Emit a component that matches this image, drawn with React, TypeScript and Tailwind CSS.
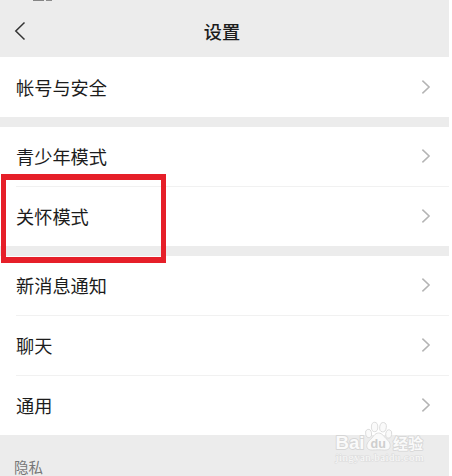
type RowProps = {
  label: string;
  height: string;
  divider?: boolean;
};

function SettingRow({ label, height, divider }: RowProps) {
  return (
    <div className={`flex pl-4 ${height}`}>
      <div
        className={`flex flex-1 items-center justify-between pr-[18px] pt-px ${
          divider ? 'border-b border-[#f1f1f1]' : ''
        }`}
      >
        <span className="pb-[1.5px] text-[18.2px] leading-6">{label}</span>
        <svg className="mb-px h-4 w-[10px]" viewBox="0 0 10 16" fill="none">
          <path d="M1.4 1.6L8.1 8L1.4 14.4" stroke="#b4b4b4" strokeWidth="1.5" />
        </svg>
      </div>
    </div>
  );
}

function Watermark() {
  return (
    <svg
      className="absolute left-[330px] top-[418px] h-[50px] w-[100px]"
      viewBox="0 0 100 50"
      fontFamily='"Liberation Sans", "Noto Sans CJK SC", sans-serif'
    >
      <g fill="#fafafa" stroke="#d6d6d6" strokeLinejoin="round">
        <text x="5.5" y="31" fontSize="19" fontWeight="700" strokeWidth="1.8" textLength="29" lengthAdjust="spacingAndGlyphs" paintOrder="stroke">
          Bai
        </text>
        <g strokeWidth="0.8">
          <ellipse cx="38.6" cy="15.5" rx="3" ry="4.2" transform="rotate(-12 38.6 15.5)" />
          <ellipse cx="44.6" cy="9" rx="3.2" ry="4.7" />
          <ellipse cx="53" cy="9.2" rx="3.3" ry="4.7" transform="rotate(8 53 9.2)" />
          <ellipse cx="58.7" cy="16" rx="3" ry="4.2" transform="rotate(12 58.7 16)" />
          <path d="M48.5 15C44.5 15 43.5 19 40.5 21.5C37 24 35.6 28.8 38 31C40.2 32.8 44 31.8 48.5 31.8C53 31.8 56.8 32.8 59 31C61.3 28.8 60.3 24 57 21.5C54 19 52.5 15 48.5 15Z" />
        </g>
        <text x="63" y="30.5" fontSize="15" fontWeight="700" strokeWidth="1.6" textLength="30" paintOrder="stroke">
          经验
        </text>
      </g>
      <text x="40.5" y="30" fontSize="12.5" fontWeight="700" fill="#cecece" textLength="15.5">
        du
      </text>
      <text x="5.5" y="42.5" fontSize="11" fontFamily='"Liberation Serif", serif' fill="#fafafa" stroke="#dcdcdc" strokeWidth="1.2" textLength="88" paintOrder="stroke">
        jingyan.baidu.com
      </text>
    </svg>
  );
}

export default function App() {
  return (
    <div className="h-[476px] w-[452px] overflow-hidden bg-white">
      <main className='relative flex h-full w-[449px] flex-col overflow-hidden bg-[#ececec] font-["Noto_Sans_CJK_SC",sans-serif] text-[#1c1c1c]'>
        {/* Bottom edge of the status bar */}
        <div className="flex h-[2px] shrink-0 gap-[2px] pl-[33px]">
          <span className="h-px w-[11px] bg-[#858585]" />
          <span className="h-px w-[6px] bg-[#8c8c8c]" />
        </div>

        <header className="grid h-[55px] shrink-0 grid-cols-3 items-center pb-[3px] pt-[5px]">
          <svg className="ml-[14px] h-5 w-3" viewBox="0 0 12 20" fill="none">
            <path d="M10.5 1.5L1.8 10L10.5 18.5" stroke="#333" strokeWidth="1.5" />
          </svg>
          <h1 className="pr-[5px] text-center text-[18.2px] font-medium leading-6">设置</h1>
        </header>

        <section className="bg-white">
          <SettingRow label="帐号与安全" height="h-[59.5px]" />
        </section>

        <section className="mt-[10px] bg-white">
          <SettingRow label="青少年模式" height="h-[60px]" divider />
          <SettingRow label="关怀模式" height="h-[59px]" />
        </section>

        <section className="mt-[10px] bg-white">
          <SettingRow label="新消息通知" height="h-[60px]" divider />
          <SettingRow label="聊天" height="h-[60px]" divider />
          <SettingRow label="通用" height="h-[59px]" />
        </section>

        <h2 className="pl-[14px] pt-[23px] text-[14.5px] leading-[18px] text-[#777]">隐私</h2>

        <div className="absolute left-px top-[174px] h-[89px] w-[165px] border-x-[5px] border-y-[6px] border-[#e61f29]" />
        <Watermark />
      </main>
    </div>
  );
}
